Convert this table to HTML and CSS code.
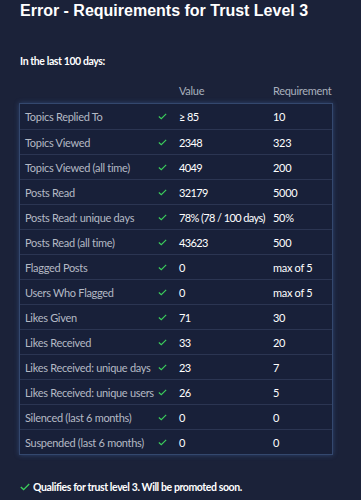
FILE: index.html
```html
<!DOCTYPE html>
<html>
<head>
<meta charset="utf-8">
<link rel="stylesheet" href="styles.css">
</head>
<body>
<div class="page">
  <h1 class="title">Error - Requirements for Trust Level 3</h1>
  <p class="intro">In the last 100 days:</p>
  <div class="head">
    <span class="h-label"></span>
    <span class="h-check"></span>
    <span class="h-val">Value</span>
    <span class="h-req">Requirement</span>
  </div>
  <div class="box">
    <div class="row"><span class="label">Topics Replied To</span><span class="chk"><svg viewBox="0 0 10 8" width="9" height="7"><path d="M0.8 4 L3.6 6.6 L9.2 1" fill="none" stroke="#3ccf5c" stroke-width="1.3"/></svg></span><span class="val">≥ 85</span><span class="req">10</span></div>
    <div class="row"><span class="label">Topics Viewed</span><span class="chk"><svg viewBox="0 0 10 8" width="9" height="7"><path d="M0.8 4 L3.6 6.6 L9.2 1" fill="none" stroke="#3ccf5c" stroke-width="1.3"/></svg></span><span class="val">2348</span><span class="req">323</span></div>
    <div class="row"><span class="label">Topics Viewed (all time)</span><span class="chk"><svg viewBox="0 0 10 8" width="9" height="7"><path d="M0.8 4 L3.6 6.6 L9.2 1" fill="none" stroke="#3ccf5c" stroke-width="1.3"/></svg></span><span class="val">4049</span><span class="req">200</span></div>
    <div class="row"><span class="label">Posts Read</span><span class="chk"><svg viewBox="0 0 10 8" width="9" height="7"><path d="M0.8 4 L3.6 6.6 L9.2 1" fill="none" stroke="#3ccf5c" stroke-width="1.3"/></svg></span><span class="val">32179</span><span class="req">5000</span></div>
    <div class="row"><span class="label">Posts Read: unique days</span><span class="chk"><svg viewBox="0 0 10 8" width="9" height="7"><path d="M0.8 4 L3.6 6.6 L9.2 1" fill="none" stroke="#3ccf5c" stroke-width="1.3"/></svg></span><span class="val">78% (78 / 100 days)</span><span class="req">50%</span></div>
    <div class="row"><span class="label">Posts Read (all time)</span><span class="chk"><svg viewBox="0 0 10 8" width="9" height="7"><path d="M0.8 4 L3.6 6.6 L9.2 1" fill="none" stroke="#3ccf5c" stroke-width="1.3"/></svg></span><span class="val">43623</span><span class="req">500</span></div>
    <div class="row"><span class="label">Flagged Posts</span><span class="chk"><svg viewBox="0 0 10 8" width="9" height="7"><path d="M0.8 4 L3.6 6.6 L9.2 1" fill="none" stroke="#3ccf5c" stroke-width="1.3"/></svg></span><span class="val">0</span><span class="req">max of 5</span></div>
    <div class="row"><span class="label">Users Who Flagged</span><span class="chk"><svg viewBox="0 0 10 8" width="9" height="7"><path d="M0.8 4 L3.6 6.6 L9.2 1" fill="none" stroke="#3ccf5c" stroke-width="1.3"/></svg></span><span class="val">0</span><span class="req">max of 5</span></div>
    <div class="row"><span class="label">Likes Given</span><span class="chk"><svg viewBox="0 0 10 8" width="9" height="7"><path d="M0.8 4 L3.6 6.6 L9.2 1" fill="none" stroke="#3ccf5c" stroke-width="1.3"/></svg></span><span class="val">71</span><span class="req">30</span></div>
    <div class="row"><span class="label">Likes Received</span><span class="chk"><svg viewBox="0 0 10 8" width="9" height="7"><path d="M0.8 4 L3.6 6.6 L9.2 1" fill="none" stroke="#3ccf5c" stroke-width="1.3"/></svg></span><span class="val">33</span><span class="req">20</span></div>
    <div class="row"><span class="label">Likes Received: unique days</span><span class="chk"><svg viewBox="0 0 10 8" width="9" height="7"><path d="M0.8 4 L3.6 6.6 L9.2 1" fill="none" stroke="#3ccf5c" stroke-width="1.3"/></svg></span><span class="val">23</span><span class="req">7</span></div>
    <div class="row"><span class="label">Likes Received: unique users</span><span class="chk"><svg viewBox="0 0 10 8" width="9" height="7"><path d="M0.8 4 L3.6 6.6 L9.2 1" fill="none" stroke="#3ccf5c" stroke-width="1.3"/></svg></span><span class="val">26</span><span class="req">5</span></div>
    <div class="row"><span class="label">Silenced (last 6 months)</span><span class="chk"><svg viewBox="0 0 10 8" width="9" height="7"><path d="M0.8 4 L3.6 6.6 L9.2 1" fill="none" stroke="#3ccf5c" stroke-width="1.3"/></svg></span><span class="val">0</span><span class="req">0</span></div>
    <div class="row"><span class="label">Suspended (last 6 months)</span><span class="chk"><svg viewBox="0 0 10 8" width="9" height="7"><path d="M0.8 4 L3.6 6.6 L9.2 1" fill="none" stroke="#3ccf5c" stroke-width="1.3"/></svg></span><span class="val">0</span><span class="req">0</span></div>
  </div>
  <p class="result"><svg viewBox="0 0 10 8" width="10" height="8"><path d="M0.8 4 L3.6 6.6 L9.2 1" fill="none" stroke="#3ccf5c" stroke-width="1.3"/></svg><span>Qualifies for trust level 3. Will be promoted soon.</span></p>
</div>
</body>
</html>
```
FILE: styles.css
```css
html, body {
  margin: 0;
  padding: 0;
  background: #1b2239;
}
.page {
  padding: 0 28px 0 19px;
  font-family: "Lato", "Open Sans", sans-serif;
  font-size: 11px;
  letter-spacing: -0.3px;
  color: #ffffff;
}
.title {
  margin: 0;
  padding: 0 0 0 1px;
  font-family: "Liberation Sans", Arial, sans-serif;
  font-weight: bold;
  font-size: 16px;
  letter-spacing: 0;
  line-height: 22px;
  white-space: nowrap;
  color: #ffffff;
}
.intro {
  margin: 31px 0 0 1px;
  line-height: 16px;
  font-weight: bold;
  font-size: 10.5px;
  letter-spacing: -0.4px;
}
.head {
  display: grid;
  grid-template-columns: 138px 16px 99px 1fr;
  margin-top: 14px;
  padding-left: 1px;
  height: 20px;
  line-height: 16px;
  color: #a9b0bd;
}
.box {
  border: 1px solid #34486e;
  box-shadow: 0 0 5px rgba(70, 110, 180, 0.45);
  background: #182039;
}
.row {
  display: grid;
  grid-template-columns: 138px 16px 99px 1fr;
  height: 25px;
  box-sizing: border-box;
  align-items: center;
  border-top: 1px solid #2b3552;
}
.row:first-child { border-top: none; }
.label {
  padding-left: 5px;
  color: #b4b9c4;
  white-space: nowrap;
}
.chk { display: flex; align-items: center; }
.h-val, .val { padding-left: 5px; white-space: nowrap; }
.val { letter-spacing: -0.6px; }
.val, .req { color: #ffffff; white-space: nowrap; }
.result {
  margin: 24px 0 0 1px;
  display: flex;
  align-items: center;
  gap: 3px;
  line-height: 16px;
  font-weight: bold;
  font-size: 10.5px;
  letter-spacing: -0.4px;
}
```
